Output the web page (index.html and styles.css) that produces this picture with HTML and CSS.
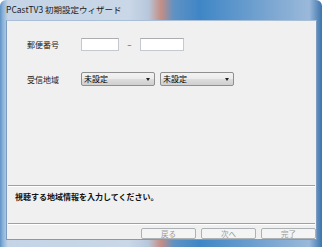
FILE: index.html
```html
<!DOCTYPE html>
<html lang="ja">
<head>
  <meta charset="UTF-8" />
  <title>PCastTV3 初期設定ウィザード</title>
  <meta name="viewport" content="width=device-width, initial-scale=1" />
  <link rel="stylesheet" href="styles.css">
</head>
<body>
  <div class="window">
    <!-- Titelleiste -->
    <div class="titlebar">PCastTV3 初期設定ウィザード</div>

    <div class="client">
      <!-- Eingaben -->
      <div class="form">
        <div class="row">
          <span class="label">郵便番号</span>
          <span class="textbox zip1"></span>
          <span class="dash">–</span>
          <span class="textbox zip2"></span>
        </div>
        <div class="row area">
          <span class="label">受信地域</span>
          <span class="combo">未設定<i class="arrow"></i></span>
          <span class="combo">未設定<i class="arrow"></i></span>
        </div>
      </div>

      <div class="sep"></div>
      <div class="message">視聴する地域情報を入力してください。</div>
      <div class="sep"></div>

      <!-- Buttons -->
      <div class="buttons">
        <button disabled>戻る</button>
        <button disabled>次へ</button>
        <button disabled>完了</button>
      </div>
    </div>
  </div>
</body>
</html>
```

FILE: styles.css
```css
body {
  margin: 0; padding: 0;
  font-family: "Noto Sans CJK JP", "Noto Sans", sans-serif;
  font-size: 8px;
  color: #000;
  width: 322px;
  height: 247px;
  overflow: hidden;
}

.window {
  box-sizing: border-box;
  width: 322px;
  height: 247px;
  padding: 0 5px 7px 6px;
  display: flex;
  flex-direction: column;
  background: linear-gradient(to right, #5d92c6 0px, #8db3da 3px, #c4d4e6 8px, #c9d7e7 40%, #b8c8dc 46%, #c58d84 50%, #5f92c4 54%, #3f86c6 62%, #7ea8d2 85%, #9ab9da 96%, #3c74ac 100%);
  border-radius: 6px 6px 0 0;
}

/* --- Titelleiste --- */
.titlebar {
  height: 20px;
  line-height: 18px;
  font-size: 8.5px;
  color: #1a1a1a;
  white-space: nowrap;
}

/* --- Client --- */
.client {
  flex: 1;
  display: flex;
  flex-direction: column;
  background: #f0f0f0;
  border: 1px solid #7b9cc0;
  border-top-color: #a9bfd8;
}

.form {
  flex: 1;
  padding: 17px 0 0 20px;
}
.row {
  display: flex;
  align-items: center;
  height: 13px;
}
.row.area {
  margin-top: 21px;
  height: 14px;
}
.label {
  width: 54px;
  color: #222;
}
.textbox {
  box-sizing: border-box;
  height: 13px;
  background: #fff;
  border: 1px solid #c4c9d0;
  border-top-color: #abadb3;
}
.zip1 { width: 38px; }
.zip2 { width: 44px; }
.dash {
  width: 21px;
  text-align: center;
  color: #333;
}

.combo {
  box-sizing: border-box;
  position: relative;
  width: 74px;
  height: 14px;
  margin-right: 5px;
  padding-left: 2px;
  line-height: 12px;
  border: 1px solid #8e8f8f;
  border-radius: 2px;
  background: linear-gradient(#f2f2f2, #ebebeb 50%, #dddddd 51%, #cfcfcf);
}
.combo .arrow {
  position: absolute;
  right: 4px;
  top: 5px;
  width: 0;
  height: 0;
  border-left: 2.5px solid transparent;
  border-right: 2.5px solid transparent;
  border-top: 3px solid #222;
}

.sep {
  height: 1px;
  border-top: 1px solid #a0a0a0;
  background: #fff;
  margin: 0 1px;
}
.message {
  height: 36px;
  padding: 4px 0 0 8px;
  box-sizing: border-box;
  font-weight: bold;
  color: #111;
}

.buttons {
  display: flex;
  justify-content: flex-end;
  gap: 5px;
  box-sizing: border-box;
  height: 14px;
  padding-top: 3px;
}
.buttons button {
  box-sizing: border-box;
  width: 55px;
  height: 11px;
  padding: 0;
  font-family: inherit;
  font-size: 7.5px;
  line-height: 9px;
  color: #9a9a9a;
  background: #f4f4f4;
  border: 1px solid #adb2b5;
  border-radius: 2px;
}
```
